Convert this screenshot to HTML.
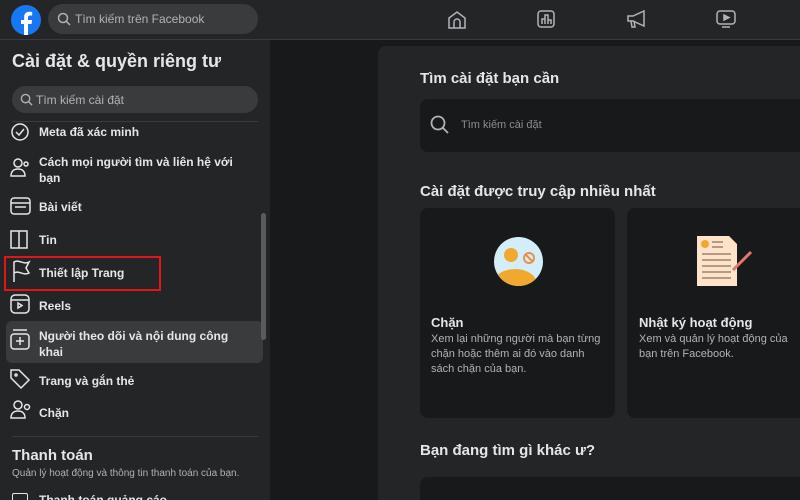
<!DOCTYPE html>
<html><head><meta charset="utf-8"><style>
*{margin:0;padding:0;box-sizing:border-box}
html{width:800px;height:500px;overflow:hidden}
body{width:800px;height:500px;overflow:hidden;background:#18191a;font-family:"Liberation Sans","Noto Sans CJK SC",sans-serif;color:#e4e6eb;position:relative}
.abs{position:absolute}
.top{left:0;top:0;width:800px;height:40px;background:#242526;border-bottom:1px solid #3a3b3c}
.side{left:0;top:40px;width:270px;height:460px;background:#242526}
.item{position:absolute;left:39px;font-size:12px;font-weight:bold;color:#e4e6eb;line-height:16px}
.panel{left:378px;top:46px;width:430px;height:454px;background:#242526;border-radius:8px 8px 0 0}
.h{position:absolute;font-size:15px;font-weight:bold;color:#e4e6eb}
.card{position:absolute;background:#18191a;border-radius:8px}
</style></head><body>
<div class="abs top"></div>
<svg class="abs" style="left:10px;top:4px" width="32" height="32" viewBox="0 0 32 32"><circle cx="16" cy="16" r="15" fill="#1877f2"/><path d="M18 31V20h3.5l.6-4H18v-2.5c0-1.2.5-2 2.2-2h2V8c-.6-.1-1.8-.2-3-.2-3 0-5 1.8-5 5.1V16h-3.2v4H14v11z" fill="#fff"/></svg>
<div class="abs" style="left:48px;top:4px;width:210px;height:30px;border-radius:15px;background:#3a3b3c"></div>
<svg class="abs" style="left:57px;top:12px" width="14" height="14" viewBox="0 0 14 14" fill="none" stroke="#b0b3b8" stroke-width="1.5"><circle cx="6" cy="6" r="4.5"/><path d="M9.5 9.5L13 13"/></svg>
<div class="abs" style="left:75px;top:12px;font-size:12px;color:#b0b3b8">Tìm kiếm trên Facebook</div>
<svg class="abs" style="left:446px;top:9px" width="22" height="22" viewBox="0 0 22 22" fill="none" stroke="#b0b3b8" stroke-width="1.5"><path d="M3 19V9l8-6 8 6v10z"/><path d="M8 19v-6a3 3 0 016 0v6"/></svg>
<svg class="abs" style="left:535px;top:8px" width="22" height="22" viewBox="0 0 22 22" fill="none" stroke="#b0b3b8" stroke-width="1.5"><rect x="3" y="3" width="16" height="16" rx="3"/><path d="M7 16V11h3v5M10 16V7h3v9M13 16v-4h3v4"/></svg>
<svg class="abs" style="left:625px;top:8px" width="24" height="22" viewBox="0 0 24 22" fill="none" stroke="#b0b3b8" stroke-width="1.5"><path d="M3 8h5l11-5v15L8 13H3z"/><path d="M6 13l1 6h3l-1-6"/></svg>
<svg class="abs" style="left:715px;top:8px" width="22" height="22" viewBox="0 0 22 22" fill="none" stroke="#b0b3b8" stroke-width="1.5"><rect x="2" y="3" width="18" height="13" rx="3"/><path d="M9 7l5 2.5L9 12z" fill="#b0b3b8"/><path d="M7 19h8"/></svg>
<div class="abs side"></div>
<div class="abs" style="left:12px;top:51px;font-size:18px;font-weight:bold">Cài đặt &amp; quyền riêng tư</div>
<div class="abs" style="left:12px;top:86px;width:246px;height:27px;border-radius:14px;background:#3a3b3c"></div>
<svg class="abs" style="left:20px;top:93px" width="13" height="13" viewBox="0 0 14 14" fill="none" stroke="#b0b3b8" stroke-width="1.5"><circle cx="6" cy="6" r="4.5"/><path d="M9.5 9.5L13 13"/></svg>
<div class="abs" style="left:36px;top:93px;font-size:12px;color:#b0b3b8">Tìm kiếm cài đặt</div>
<div class="abs" style="left:12px;top:121px;width:246px;height:1px;background:#3a3b3c"></div>
<div class="abs" style="left:6px;top:321px;width:257px;height:42px;border-radius:6px;background:#3a3b3c"></div>
<div class="abs" style="left:4px;top:256px;width:157px;height:35px;border:2px solid #e0161b"></div>
<div class="abs" style="left:261px;top:213px;width:5px;height:127px;border-radius:3px;background:#5a5b5c"></div>
<svg class="abs" style="left:0;top:118px" width="36" height="310" fill="none" stroke="#e4e6eb" stroke-width="1.5">
<circle cx="20" cy="14" r="8"/><path d="M16 14l3 3 5-6"/>
<circle cx="18" cy="45" r="4"/><path d="M11 58c0-5 3-7 7-7s7 2 7 7z"/><circle cx="26" cy="46" r="2"/>
<rect x="11" y="80" width="19" height="16" rx="3"/><path d="M11 85h19M15 89h11"/>
<path d="M11 113h8v17h-8zM19 113h8v17h-8"/>
<path d="M14 164V144c5-3 9 3 15 0l-3 6 3 5c-6 3-10-3-15 0"/>
<rect x="11" y="177" width="18" height="18" rx="4"/><path d="M11 182h18M18 185l4 2.5-4 2.5z"/>
<rect x="11" y="216" width="18" height="15" rx="3"/><path d="M13 212h14M20 219v8M16 223h8"/>
<path d="M11 252v8l10 10 8-8-10-10z"/><circle cx="16" cy="257" r="1"/>
<circle cx="18" cy="287" r="4"/><path d="M11 300c0-5 3-7 7-7s7 2 7 7z"/><circle cx="27" cy="289" r="2.5"/>
</svg>
<div class="item" style="top:124px">Meta đã xác minh</div>
<div class="item" style="top:154px">Cách mọi người tìm và liên hệ với<br>bạn</div>
<div class="item" style="top:199px">Bài viết</div>
<div class="item" style="top:232px">Tin</div>
<div class="item" style="top:265px">Thiết lập Trang</div>
<div class="item" style="top:298px">Reels</div>
<div class="item" style="top:328px">Người theo dõi và nội dung công<br>khai</div>
<div class="item" style="top:373px">Trang và gắn thẻ</div>
<div class="item" style="top:405px">Chặn</div>
<div class="abs" style="left:12px;top:436px;width:246px;height:1px;background:#3a3b3c"></div>
<div class="abs" style="left:12px;top:447px;font-size:15px;font-weight:bold">Thanh toán</div>
<div class="abs" style="left:12px;top:468px;font-size:10px;color:#b0b3b8">Quản lý hoạt động và thông tin thanh toán của bạn.</div>
<div class="abs" style="left:12px;top:493px;width:16px;height:10px;border:1.5px solid #e4e6eb;border-radius:2px"></div>
<div class="item" style="top:492px">Thanh toán quảng cáo</div>
<div class="abs panel"></div>
<div class="h" style="left:420px;top:70px">Tìm cài đặt bạn cần</div>
<div class="card" style="left:420px;top:99px;width:400px;height:53px"></div>
<svg class="abs" style="left:430px;top:115px" width="20" height="20" viewBox="0 0 20 20" fill="none" stroke="#b0b3b8" stroke-width="1.8"><circle cx="8" cy="8" r="6.5"/><path d="M12.5 12.5L18 18"/></svg>
<div class="abs" style="left:461px;top:119px;font-size:11px;color:#8a8d91">Tìm kiếm cài đặt</div>
<div class="h" style="left:420px;top:183px">Cài đặt được truy cập nhiều nhất</div>
<div class="card" style="left:420px;top:208px;width:195px;height:210px"></div>
<div class="card" style="left:627px;top:208px;width:200px;height:210px"></div>
<svg class="abs" style="left:493px;top:236px" width="51" height="51" viewBox="0 0 51 51"><clipPath id="c"><circle cx="25.5" cy="25.5" r="24.5"/></clipPath><circle cx="25.5" cy="25.5" r="24.5" fill="#d4eef9"/><g clip-path="url(#c)" fill="#f0a92e"><circle cx="18" cy="19" r="7"/><ellipse cx="22" cy="48" rx="22" ry="15"/></g><circle cx="36" cy="22" r="5" fill="none" stroke="#e8904a" stroke-width="2"/><path d="M33 19l6 6" stroke="#e8904a" stroke-width="2"/></svg>
<svg class="abs" style="left:695px;top:234px" width="60" height="54" viewBox="0 0 60 54"><path d="M2 2h32l8 8v42H2z" fill="#fde3c9"/><circle cx="10" cy="10" r="4" fill="#f0a92e"/><g stroke="#8a6f5b" stroke-width="1.3"><path d="M17 8h11M17 13h11M7 20h29M7 26h29M7 32h29M7 38h29M7 44h29"/></g><path d="M38 36l18-18" stroke="#e4756f" stroke-width="3"/></svg>
<div class="abs" style="left:431px;top:315px;font-size:13px;font-weight:bold">Chặn</div>
<div class="abs" style="left:431px;top:332px;font-size:11px;color:#b0b3b8;line-height:15px;width:172px">Xem lại những người mà bạn từng chặn hoặc thêm ai đó vào danh sách chặn của bạn.</div>
<div class="abs" style="left:639px;top:315px;font-size:13px;font-weight:bold">Nhật ký hoạt động</div>
<div class="abs" style="left:639px;top:332px;font-size:11px;color:#b0b3b8;line-height:15px;width:155px">Xem và quản lý hoạt động của bạn trên Facebook.</div>
<div class="h" style="left:420px;top:442px">Bạn đang tìm gì khác ư?</div>
<div class="card" style="left:420px;top:477px;width:400px;height:40px"></div>
</body></html>
